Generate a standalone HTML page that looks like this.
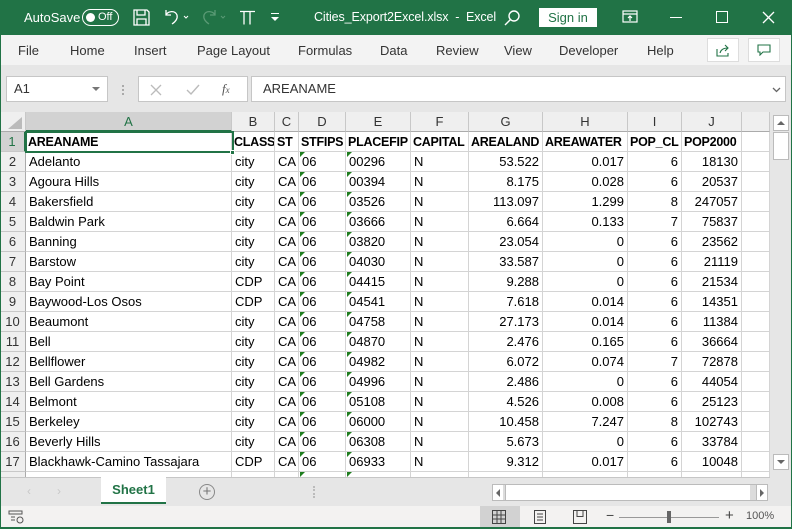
<!DOCTYPE html>
<html><head><meta charset="utf-8"><style>
*{box-sizing:border-box;margin:0;padding:0}
body{width:792px;height:529px;overflow:hidden;position:relative;background:#fff;font-family:"Liberation Sans",sans-serif;}
.a{position:absolute}
.title{left:0;top:0;width:792px;height:35px;background:#217346;color:#fff;font-size:13px}
.rib{left:0;top:35px;width:792px;height:30px;background:#f3f3f3;font-size:13px;color:#333}
.fb{left:0;top:65px;width:792px;height:47px;background:#e6e6e6}
.hd{position:absolute;background:#efefef;border-right:1px solid #c8c8c8;border-bottom:1px solid #ababab;font-size:13px;color:#333;text-align:center;line-height:19px;height:20px}
.c{position:absolute;height:20px;border-right:1px solid #d4d4d4;border-bottom:1px solid #d4d4d4;font-size:13px;line-height:20px;padding:0 3px;white-space:nowrap;overflow:hidden;color:#000}
.r{text-align:right}
.b{font-weight:bold;font-size:12.5px;letter-spacing:-0.25px;padding:0 2px}
.rh{position:absolute;left:0;width:26px;height:20px;background:#efefef;border-right:1px solid #ababab;border-bottom:1px solid #c8c8c8;font-size:13px;line-height:20px;text-align:center;color:#333}
.tri{position:absolute;width:0;height:0;border-top:5px solid #1e7d1e;border-right:5px solid transparent}
</style></head><body>
<div class="a title">
 <span class="a" style="left:24px;top:10px">AutoSave</span>
 <div class="a" style="left:82px;top:9px;width:37px;height:17px;border:1px solid #fff;border-radius:9px"><div class="a" style="left:3px;top:3px;width:9px;height:9px;border-radius:5px;background:#fff"></div><span class="a" style="left:15px;top:1px;font-size:11px">Off</span></div>
 <svg class="a" style="left:133px;top:9px" width="17" height="17" fill="none" stroke="#fff" stroke-width="1.3"><path d="M1 1h13l2 2v13H1z M4 1v5h8V1 M4 16v-6h9v6"/></svg>
 <svg class="a" style="left:163px;top:8px" width="28" height="18" fill="none" stroke="#fff" stroke-width="1.3"><path d="M3 2v5h5 M3 7c2-4 9-5 11 0 1 4-2 7-5 9"/><path d="M21 8l2 2 2-2" stroke-width="1"/></svg>
 <svg class="a" style="left:200px;top:8px" width="28" height="18" fill="none" stroke="#5a9a75" stroke-width="1.3"><path d="M15 2v5h-5 M15 7c-2-4-9-5-11 0-1 4 2 7 5 9"/><path d="M21 8l2 2 2-2" stroke-width="1"/></svg>
 <svg class="a" style="left:240px;top:10px" width="15" height="15" fill="none" stroke="#fff" stroke-width="1.3"><path d="M0 1.5h15 M4 1.5v13 M10 1.5v13"/></svg>
 <svg class="a" style="left:270px;top:13px" width="10" height="10" fill="#fff"><rect x="1" y="0" width="8" height="1"/><path d="M1 4h8L5 8z"/></svg>
 <span class="a" style="left:314px;top:10px;font-size:12.5px;letter-spacing:-0.1px">Cities_Export2Excel.xlsx &nbsp;- &nbsp;Excel</span>
 <svg class="a" style="left:503px;top:9px" width="18" height="18" fill="none" stroke="#fff" stroke-width="1.4"><circle cx="11" cy="7" r="5"/><path d="M7.5 10.5L2 16"/></svg>
 <div class="a" style="left:539px;top:8px;width:58px;height:19px;background:#fff;color:#217346;text-align:center;line-height:19px">Sign in</div>
 <svg class="a" style="left:622px;top:10px" width="16" height="14" fill="none" stroke="#fff" stroke-width="1.2"><rect x="1" y="1" width="14" height="11"/><path d="M1 4h14 M8 11V6 M6 8l2-2 2 2"/></svg>
 <div class="a" style="left:670px;top:17px;width:12px;height:1px;background:#fff"></div>
 <div class="a" style="left:716px;top:11px;width:12px;height:12px;border:1px solid #fff"></div>
 <svg class="a" style="left:762px;top:11px" width="13" height="13" stroke="#fff" stroke-width="1.3"><path d="M1 1l11 11M12 1L1 12"/></svg>
</div>
<div class="a" style="left:0;top:35px;width:1px;height:494px;background:#217346;z-index:5"></div>
<div class="a" style="right:0;top:35px;width:1px;height:494px;background:#217346;z-index:5"></div>
<div class="a" style="left:0;bottom:0;width:792px;height:2px;background:#217346;z-index:5"></div>
<div class="a rib">
 <span class="a" style="left:18px;top:8px">File</span>
 <span class="a" style="left:70px;top:8px">Home</span>
 <span class="a" style="left:134px;top:8px">Insert</span>
 <span class="a" style="left:197px;top:8px">Page Layout</span>
 <span class="a" style="left:298px;top:8px">Formulas</span>
 <span class="a" style="left:380px;top:8px">Data</span>
 <span class="a" style="left:436px;top:8px">Review</span>
 <span class="a" style="left:504px;top:8px">View</span>
 <span class="a" style="left:559px;top:8px">Developer</span>
 <span class="a" style="left:647px;top:8px">Help</span>
 <div class="a" style="left:707px;top:3px;width:32px;height:24px;background:#fff;border:1px solid #ddd"></div>
 <svg class="a" style="left:716px;top:9px" width="14" height="13" fill="none" stroke="#217346" stroke-width="1.1"><path d="M1 5v7h11v-3 M4 9c1-4 4-5 8-5 M9 1l3 3-3 3"/></svg>
 <div class="a" style="left:748px;top:3px;width:32px;height:24px;background:#fff;border:1px solid #ddd"></div>
 <svg class="a" style="left:757px;top:9px" width="14" height="12" fill="none" stroke="#217346" stroke-width="1.1"><path d="M1 1h12v7H6l-3 3V8H1z"/></svg>
</div>
<div class="a fb">
 <div class="a" style="left:6px;top:11px;width:102px;height:26px;background:#fff;border:1px solid #c6c6c6;font-size:13px;line-height:24px;padding-left:7px;color:#333">A1</div>
 <div class="a" style="left:92px;top:22px;border-top:4px solid #777;border-left:4px solid transparent;border-right:4px solid transparent"></div>
 <div class="a" style="left:122px;top:20px;width:2px;height:10px;border-left:2px dotted #aaa"></div>
 <div class="a" style="left:138px;top:11px;width:110px;height:26px;background:#fff;border:1px solid #c6c6c6"></div>
 <svg class="a" style="left:150px;top:19px" width="12" height="12" stroke="#bbb" stroke-width="1.3"><path d="M1 1l10 10M11 1L1 11"/></svg>
 <svg class="a" style="left:186px;top:19px" width="14" height="12" fill="none" stroke="#bbb" stroke-width="1.4"><path d="M1 6l4 4 8-9"/></svg>
 <span class="a" style="left:222px;top:16px;font-family:'Liberation Serif';font-style:italic;font-size:13px;color:#555">f<span style="font-size:9px">x</span></span>
 <div class="a" style="left:251px;top:11px;width:535px;height:26px;background:#fff;border:1px solid #c6c6c6;font-size:13px;line-height:24px;padding-left:11px;color:#333">AREANAME</div>
 <svg class="a" style="left:772px;top:22px" width="9" height="6" fill="none" stroke="#666" stroke-width="1.3"><path d="M1 1l3.5 3.5L8 1"/></svg>
</div>
<div class="a" style="left:0;top:112px;width:792px;height:366px;overflow:hidden">
<div id="g"></div>
</div>
<div class="a" style="left:770px;top:112px;width:21px;height:366px;background:#e6e6e6;z-index:3">
 <div class="a" style="left:3px;top:3px;width:16px;height:16px;background:#fff;border:1px solid #bbb"></div>
 <div class="a" style="left:7px;top:9px;border-bottom:4px solid #666;border-left:4px solid transparent;border-right:4px solid transparent"></div>
 <div class="a" style="left:3px;top:20px;width:16px;height:28px;background:#fff;border:1px solid #bbb"></div>
 <div class="a" style="left:3px;top:342px;width:16px;height:16px;background:#fff;border:1px solid #bbb"></div>
 <div class="a" style="left:7px;top:348px;border-top:4px solid #666;border-left:4px solid transparent;border-right:4px solid transparent"></div>
</div>
<div class="a" style="left:0;top:477px;width:792px;height:29px;background:#e6e6e6;border-top:1px solid #c6c6c6">
 <span class="a" style="left:27px;top:6px;color:#c8c8c8;font-size:12px">‹</span>
 <span class="a" style="left:57px;top:6px;color:#c8c8c8;font-size:12px">›</span>
 <div class="a" style="left:101px;top:-1px;width:65px;height:27px;background:#fff;border-bottom:2px solid #217346;color:#217346;font-weight:bold;font-size:13px;text-align:center;line-height:26px">Sheet1</div>
 <div class="a" style="left:199px;top:6px;width:16px;height:16px;border:1px solid #888;border-radius:50%;color:#777;font-size:15px;line-height:13px;text-align:center">+</div>
 <div class="a" style="left:313px;top:8px;width:2px;height:12px;border-left:2px dotted #bbb"></div>
 <div class="a" style="left:492px;top:6px;width:276px;height:17px;background:#dcdcdc;border:1px solid #bbb"></div>
 <div class="a" style="left:493px;top:7px;width:10px;height:15px;background:#fff"></div>
 <div class="a" style="left:505px;top:7px;width:245px;height:15px;background:#fff;border-left:1px solid #bbb"></div>
 <div class="a" style="left:756px;top:7px;width:11px;height:15px;background:#fff;border-left:1px solid #bbb"></div>
 <div class="a" style="left:496px;top:11px;border-right:4px solid #666;border-top:4px solid transparent;border-bottom:4px solid transparent"></div>
 <div class="a" style="left:760px;top:11px;border-left:4px solid #666;border-top:4px solid transparent;border-bottom:4px solid transparent"></div>
</div>
<div class="a" style="left:0;top:506px;width:792px;height:22px;background:#f3f2f1">
 <svg class="a" style="left:8px;top:4px" width="16" height="14" fill="none" stroke="#555" stroke-width="1"><path d="M1 1h13v3H1z M3 7h4 M3 10h4"/><circle cx="12" cy="10" r="3"/></svg>
 <div class="a" style="left:480px;top:0;width:40px;height:22px;background:#d2d2d2"></div>
 <svg class="a" style="left:492px;top:4px" width="14" height="14" fill="none" stroke="#444"><path d="M.5 .5h13v13H.5z M5 .5v13 M9 .5v13 M.5 5h13 M.5 9h13"/></svg>
 <svg class="a" style="left:533px;top:4px" width="14" height="14" fill="none" stroke="#444"><path d="M1.5 .5h11v13h-11z M4 4h6 M4 7h6 M4 10h6"/></svg>
 <svg class="a" style="left:573px;top:4px" width="14" height="14" fill="none" stroke="#444"><path d="M.5 .5h13v13H.5z M4 .5v6h6V.5"/></svg>
 <span class="a" style="left:606px;top:1px;color:#444;font-size:14px">−</span>
 <div class="a" style="left:619px;top:11px;width:100px;height:1px;background:#999"></div>
 <div class="a" style="left:667px;top:5px;width:4px;height:12px;background:#666"></div>
 <span class="a" style="left:725px;top:1px;color:#444;font-size:15px">+</span>
 <span class="a" style="left:746px;top:4px;color:#555;font-size:11px">100%</span>
</div>
<script>
var cols=[[26,232,'A'],[232,275,'B'],[275,299,'C'],[299,346,'D'],[346,411,'E'],[411,469,'F'],[469,543,'G'],[543,628,'H'],[628,682,'I'],[682,742,'J'],[742,770,'']];
var data=[
["AREANAME","CLASS","ST","STFIPS","PLACEFIP","CAPITAL","AREALAND","AREAWATER","POP_CL","POP2000"],
["Adelanto","city","CA","06","00296","N","53.522","0.017","6","18130"],
["Agoura Hills","city","CA","06","00394","N","8.175","0.028","6","20537"],
["Bakersfield","city","CA","06","03526","N","113.097","1.299","8","247057"],
["Baldwin Park","city","CA","06","03666","N","6.664","0.133","7","75837"],
["Banning","city","CA","06","03820","N","23.054","0","6","23562"],
["Barstow","city","CA","06","04030","N","33.587","0","6","21119"],
["Bay Point","CDP","CA","06","04415","N","9.288","0","6","21534"],
["Baywood-Los Osos","CDP","CA","06","04541","N","7.618","0.014","6","14351"],
["Beaumont","city","CA","06","04758","N","27.173","0.014","6","11384"],
["Bell","city","CA","06","04870","N","2.476","0.165","6","36664"],
["Bellflower","city","CA","06","04982","N","6.072","0.074","7","72878"],
["Bell Gardens","city","CA","06","04996","N","2.486","0","6","44054"],
["Belmont","city","CA","06","05108","N","4.526","0.008","6","25123"],
["Berkeley","city","CA","06","06000","N","10.458","7.247","8","102743"],
["Beverly Hills","city","CA","06","06308","N","5.673","0","6","33784"],
["Blackhawk-Camino Tassajara","CDP","CA","06","06933","N","9.312","0.017","6","10048"],
["","","","","","","","","",""]];
var h='<div class="hd" style="left:0;top:0;width:26px;background:#efefef"><svg style="position:absolute;left:8px;top:5px" width="14" height="12"><path d="M14 0v12H0z" fill="#bbb"/></svg></div>';
cols.forEach(function(c,i){h+='<div class="hd" style="left:'+c[0]+'px;top:0;width:'+(c[1]-c[0])+'px;'+(i==0?'background:#d2d2d2;color:#217346;border-bottom:2px solid #217346':'')+'">'+c[2]+'</div>';});
data.forEach(function(r,ri){var y=20+ri*20;
 h+='<div class="rh" style="top:'+y+'px;'+(ri==0?'background:#d2d2d2;color:#217346;border-right:2px solid #217346':'')+'">'+(ri+1)+'</div>';
 cols.forEach(function(c,ci){var t=ci<10?r[ci]:'';var right=ci>=6&&ci<=9&&ri>0;
  h+='<div class="c'+(right?' r':'')+(ri==0?' b':'')+'" style="left:'+c[0]+'px;top:'+y+'px;width:'+(c[1]-c[0])+'px;">'+t+'</div>';
  if(ri>0&&(ci==3||ci==4))h+='<div class="tri" style="left:'+(c[0]+1)+'px;top:'+y+'px"></div>';
 });
});
h+='<div class="a" style="left:25px;top:19px;width:209px;height:22px;border:2px solid #217346"></div><div class="a" style="left:230px;top:38px;width:5px;height:5px;background:#217346;border:1px solid #fff"></div>';
document.getElementById('g').innerHTML=h;
</script>
</body></html>
